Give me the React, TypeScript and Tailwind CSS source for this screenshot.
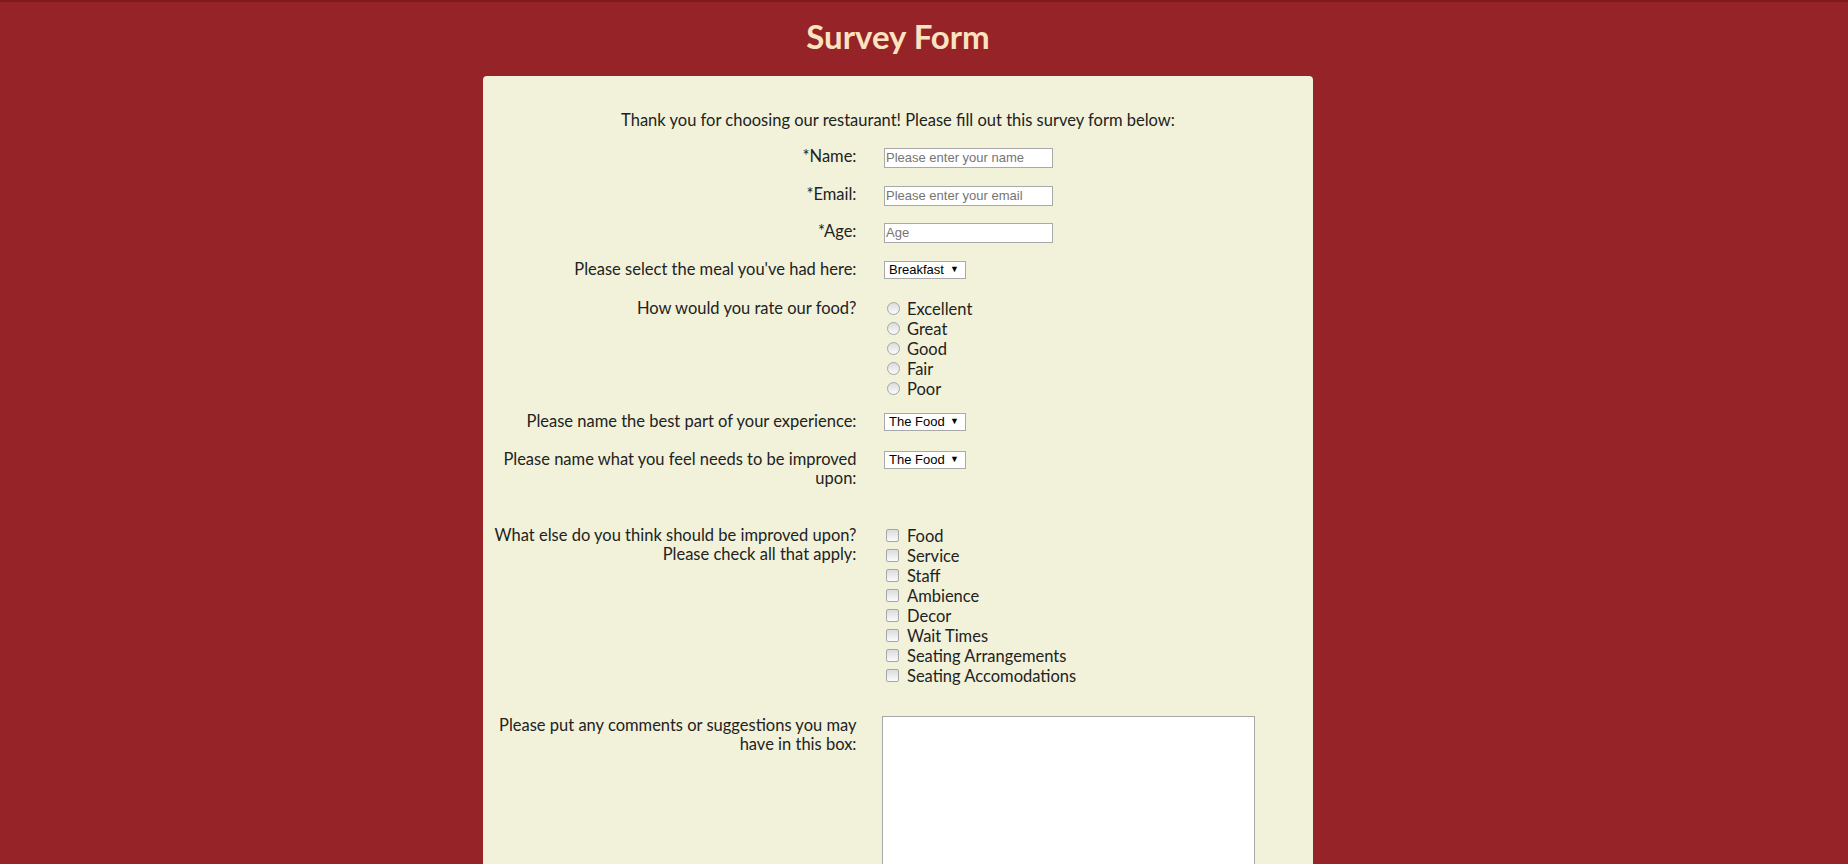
import React from "react";

const font = { fontFamily: "Lato, 'Open Sans', sans-serif" };

function Radio() {
  return (
    <span className="inline-block w-[13px] h-[13px] rounded-full border border-[#a6a6a6] bg-gradient-to-b from-[#dcdcdc] to-[#fbfbfb] ml-[5px] mr-[3px] mt-[3px] shrink-0" />
  );
}

function Check() {
  return (
    <span className="inline-block w-[13px] h-[13px] rounded-[2px] border border-[#a6a6a6] bg-gradient-to-b from-[#dcdcdc] to-[#fbfbfb] ml-[4px] mr-[4px] mt-[3px] shrink-0" />
  );
}

function FakeSelect({ value }: { value: string }) {
  return (
    <div
      className="ml-[2px] h-[18px] w-[82px] bg-white border border-[#a9a9a9] flex items-center justify-between pl-[4px] pr-[6px] text-[13px] text-black leading-none"
      style={{ fontFamily: "'Liberation Sans', Arial, sans-serif" }}
    >
      <span>{value}</span>
      <span className="text-[9px]">▼</span>
    </div>
  );
}

function TextInput({ placeholder }: { placeholder: string }) {
  return (
    <input
      placeholder={placeholder}
      className="ml-[2px] h-[20px] w-[169px] bg-white border border-[#a9a9a9] px-[1px] text-[13px] text-black placeholder:text-[#757575] outline-none"
      style={{ fontFamily: "'Liberation Sans', Arial, sans-serif" }}
    />
  );
}

function Row({
  label,
  children,
  className,
  center,
}: {
  label: React.ReactNode;
  children: React.ReactNode;
  className?: string;
  center?: boolean;
}) {
  return (
    <div className={"flex " + (center ? "items-center " : "items-start ") + (className ?? "")}>
      <div className="w-[373.5px] text-right leading-[19px] shrink-0">{label}</div>
      <div className="pl-[25.5px] flex-1">{children}</div>
    </div>
  );
}

export default function App() {
  const rates = ["Excellent", "Great", "Good", "Fair", "Poor"];
  const improve = [
    "Food",
    "Service",
    "Staff",
    "Ambience",
    "Decor",
    "Wait Times",
    "Seating Arrangements",
    "Seating Accomodations",
  ];
  return (
    <div className="min-h-screen bg-[#952327] border-t-2 border-[#7d1b1f] overflow-hidden" style={font}>
      <div className="w-[1796px]">
        <h1 className="text-center text-[33px] font-bold text-[#fbe3c2] leading-[36px] pt-[16px]">Survey Form</h1>
        <div className="mx-auto mt-[22px] w-[830px] bg-[#f2f2da] rounded-[4px] pt-[35px] pb-[40px] text-[16.5px] text-[#222]">
          <p className="text-center leading-[19px]">
            Thank you for choosing our restaurant! Please fill out this survey form below:
          </p>
          <Row label="*Name:" center className="mt-[16.5px] h-[20px]">
            <TextInput placeholder="Please enter your name" />
          </Row>
          <Row label="*Email:" center className="mt-[18px] h-[20px]">
            <TextInput placeholder="Please enter your email" />
          </Row>
          <Row label="*Age:" center className="mt-[17px] h-[20px]">
            <TextInput placeholder="Age" />
          </Row>
          <Row label="Please select the meal you've had here:" center className="mt-[18px] h-[20px]">
            <FakeSelect value="Breakfast" />
          </Row>
          <Row label={<div className="pt-[0.5px]">How would you rate our food?</div>} className="mt-[19px]">
            <div className="flex flex-col">
              {rates.map((r) => (
                <div key={r} className="flex items-start h-[20px] leading-[20px]">
                  <Radio />
                  <span className="ml-[4px]">{r}</span>
                </div>
              ))}
            </div>
          </Row>
          <Row label="Please name the best part of your experience:" center className="mt-[13px] h-[20px]">
            <FakeSelect value="The Food" />
          </Row>
          <Row
            label={
              <>
                Please name what you feel needs to be improved
                <br />
                upon:
              </>
            }
            className="mt-[18px]"
          >
            <div className="pt-[1px]">
              <FakeSelect value="The Food" />
            </div>
          </Row>
          <Row
            label={
              <>
                What else do you think should be improved upon?
                <br />
                Please check all that apply:
              </>
            }
            className="mt-[38px]"
          >
            <div className="flex flex-col">
              {improve.map((r) => (
                <div key={r} className="flex items-start h-[20px] leading-[20px]">
                  <Check />
                  <span className="ml-[4px]">{r}</span>
                </div>
              ))}
            </div>
          </Row>
          <Row
            label={
              <>
                Please put any comments or suggestions you may
                <br />
                have in this box:
              </>
            }
            className="mt-[30.5px]"
          >
            <textarea className="block w-[373px] h-[200px] bg-white border border-[#a9a9a9] outline-none resize" />
          </Row>
        </div>
      </div>
    </div>
  );
}
